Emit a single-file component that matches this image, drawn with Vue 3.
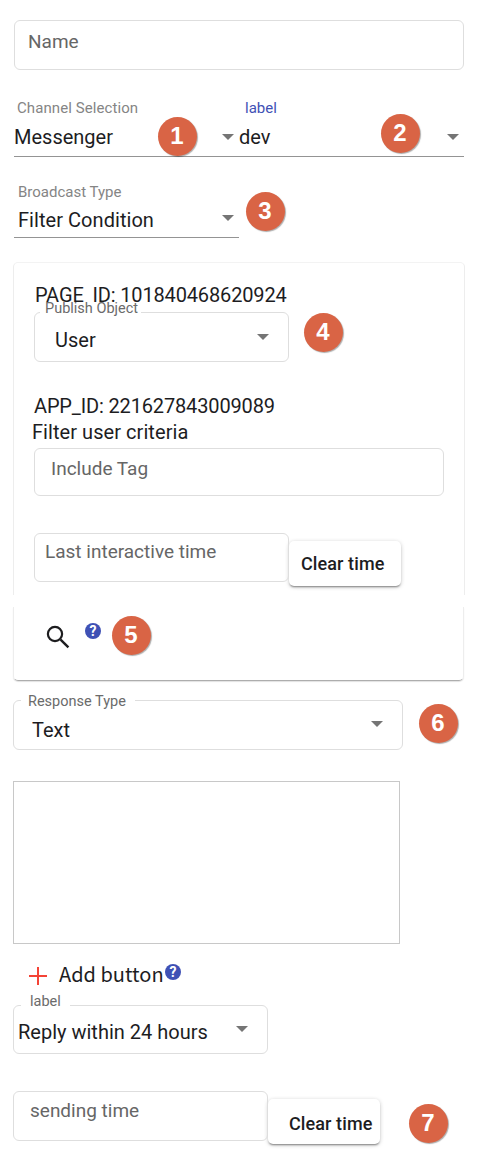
<script setup>
const steps = [
  { n: 1, x: 177, y: 136 },
  { n: 2, x: 400, y: 133 },
  { n: 3, x: 265, y: 211 },
  { n: 4, x: 323, y: 332 },
  { n: 5, x: 131, y: 635 },
  { n: 6, x: 438, y: 723 },
  { n: 7, x: 428, y: 1123 },
]
</script>

<template>
  <main class="page">
    <div class="box name"><span class="t hint t-name">Name</span></div>

    <div class="line-row channel">
      <div class="col col-a">
        <span class="small s-channel">Channel Selection</span>
        <span class="t t-mess">Messenger</span>
        <i class="arrow"></i>
      </div>
      <div class="col col-b">
        <span class="small blue s-label">label</span>
        <span class="t t-dev">dev</span>
        <i class="arrow"></i>
      </div>
    </div>

    <div class="line-row type">
      <div class="col">
        <span class="small s-type">Broadcast Type</span>
        <span class="t t-filter">Filter Condition</span>
        <i class="arrow"></i>
      </div>
    </div>

    <section class="card upper">
      <p class="t t-page">PAGE_ID: 101840468620924</p>
      <div class="box publish">
        <span class="legend l-publish"><span class="s-publish">Publish Object</span></span>
        <span class="t t-user">User</span>
        <i class="arrow"></i>
      </div>
      <p class="t t-app">APP_ID: 221627843009089</p>
      <p class="t t-criteria">Filter user criteria</p>
      <div class="box include"><span class="t hint t-include">Include Tag</span></div>
      <div class="pair last">
        <div class="box"><span class="t hint t-last">Last interactive time</span></div>
        <button class="btn"><span class="t-clear">Clear time</span></button>
      </div>
    </section>

    <section class="card lower">
      <svg class="search" width="24" height="24" viewBox="0 0 24 24" fill="none" stroke="#1d1d1f">
        <circle cx="9" cy="9" r="7.1" stroke-width="2.2" />
        <path d="M14.6 14.6 22.4 22.4" stroke-width="2.4" />
      </svg>
      <span class="help">?</span>
    </section>

    <div class="box response">
      <span class="legend l-response"><span class="s-response">Response Type</span></span>
      <span class="t t-text">Text</span>
      <i class="arrow"></i>
    </div>

    <div class="area"></div>

    <div class="add">
      <svg width="18" height="18" viewBox="0 0 18 18" stroke="#f44336" stroke-width="2">
        <path d="M9 0V18M0 9H18" />
      </svg>
      <span class="t-add">Add button</span>
      <span class="help">?</span>
    </div>

    <div class="box reply">
      <span class="legend l-reply"><span class="s-reply">label</span></span>
      <span class="t t-reply">Reply within 24 hours</span>
      <i class="arrow"></i>
    </div>

    <div class="pair sending">
      <div class="box"><span class="t hint t-send">sending time</span></div>
      <button class="btn"><span class="t-clear">Clear time</span></button>
    </div>

    <b v-for="s in steps" :key="s.n" class="step" :style="{ left: s.x - 19.5 + 'px', top: s.y - 19.5 + 'px' }">{{ s.n }}</b>
  </main>
</template>

<style>
body { background: #fff; }
</style>

<style scoped>
* { box-sizing: border-box; }
.page { position: relative; width: 480px; height: 1149px; padding: 20px 16px 0 13px; overflow: hidden; background: #fff; color: #1d1d1f; font-family: Roboto, sans-serif; display: flex; flex-direction: column; align-items: flex-start; }
.t { display: block; margin: 0; font-size: 20px; line-height: 24px; white-space: nowrap; }
.hint { color: #666; font-size: 19px; }
.box { position: relative; flex: none; border: 1px solid #dedede; border-radius: 6px; width: 255px; height: 50px; }
.small { display: block; height: 18px; font-size: 15px; line-height: 18px; color: #858585; white-space: nowrap; }
.small.blue { color: #3f51b5; }
.arrow { position: absolute; width: 0; height: 0; border: 6px solid transparent; border-top-color: #757575; border-bottom: 0; }

.name { width: 450px; margin-left: 1px; }
.t-name { padding: 9px 0 0 13px; }

.line-row { display: flex; flex: none; margin-left: 1px; border-bottom: 1px solid #949494; }
.channel { width: 450px; height: 58px; margin-top: 29px; }
.s-channel { letter-spacing: .08px; }
.col { position: relative; width: 225px; }
.col .small { margin-left: 3px; }
.col .t { margin-top: 8px; }
.col .arrow { right: 5px; top: 35px; }
.col-b .small { margin-left: 6px; }

.type { width: 225px; height: 55px; margin-top: 26px; }
.type .small { margin-left: 4px; }
.type .t { margin: 7px 0 0 4px; letter-spacing: .05px; }
.type .arrow { top: 32px; }

.card { flex: none; width: 451px; border-radius: 5px; }
.upper { width: 452px; height: 333px; margin-top: 24px; padding: 20px 0 0 21px; border: 1px solid #ededed; border-top-color: #f3f3f3; border-bottom: 0; border-radius: 5px 5px 0 0; }
.t-page, .t-app { letter-spacing: -.15px; }
.publish { margin: 5px 0 0 -1px; }
.t-user { padding: 15px 0 0 20px; }
.publish .arrow { right: 19px; top: 21px; }
.t-app { margin: 32px 0 0 -1px; }
.t-criteria { margin: 2px 0 0 -3px; letter-spacing: .06px; }
.include { width: 410px; height: 48px; margin: 4px 0 0 -1px; }
.t-include { padding: 8px 0 0 16px; }
.pair { display: flex; flex: none; align-items: flex-start; }
.last { margin: 37px 0 0 -1px; }
.last .box { height: 49px; }
.t-last { padding: 6px 0 0 10px; }
.btn { flex: none; width: 112px; height: 45px; margin-top: 8px; padding: 0; border: 0; border-radius: 5px; background: #fff; color: #1d1d1f; font: 500 18px/22px Roboto, sans-serif; letter-spacing: .1px; text-align: left; white-space: nowrap; box-shadow: 0 2px 2px -1px rgba(0,0,0,.4), 0 1px 4px rgba(0,0,0,.22); }
.last .btn { padding: 1px 0 0 12px; }

.lower { display: flex; align-items: flex-start; height: 74px; margin-top: 12px; padding: 18px 0 0 32px; border: 1px solid #ededed; border-top: 0; border-bottom-color: #adadad; border-radius: 0 0 5px 5px; box-shadow: 0 1px 1px rgba(0,0,0,.12); }
.help { flex: none; width: 16px; height: 16px; border-radius: 50%; background: #3f51b5; color: #fff; font: 700 14px/16px Roboto, sans-serif; text-align: center; }
.lower .help { margin: -2px 0 0 15px; }

.legend { position: absolute; top: -8px; height: 17px; background: #fff; color: #6b6b6b; font-size: 14.5px; line-height: 17px; white-space: nowrap; }
.l-publish { left: 5px; width: 101px; padding-left: 5px; top: -13px; background: linear-gradient(transparent 2px, #fff 2px); }
.l-response { left: 7px; width: 114px; padding-left: 7px; }
.l-reply { left: 7px; width: 49px; padding-left: 9px; top: -13px; }

.response { width: 390px; margin-top: 19px; }
.t-text { padding: 17px 0 0 18px; }
.response .arrow { right: 19px; top: 20px; }
.area { flex: none; width: 387px; height: 163px; margin-top: 31px; border: 1px solid #c8c8c8; }

.add { display: flex; flex: none; align-items: flex-start; height: 61px; padding: 23px 0 0 16px; }
.t-add { width: 106px; margin: -7px 0 0 12px; font: 20px/28px "Noto Sans CJK SC", sans-serif; white-space: nowrap; }
.add .help { margin-top: -3px; }
.reply { height: 49px; }
.t-reply { padding: 14px 0 0 4px; }
.reply .arrow { right: 19px; top: 20px; }
.sending { margin-top: 37px; }
.t-send { padding: 7px 0 0 16px; }
.sending .btn { padding: 4px 0 0 21px; }

.step { position: absolute; width: 39px; height: 39px; border-radius: 50%; background: #d96445; color: #fff; font: 700 24px/38px "Liberation Sans", Arial, sans-serif; text-align: center; box-shadow: 1px 1px 1px rgba(0,0,0,.32); }
</style>
